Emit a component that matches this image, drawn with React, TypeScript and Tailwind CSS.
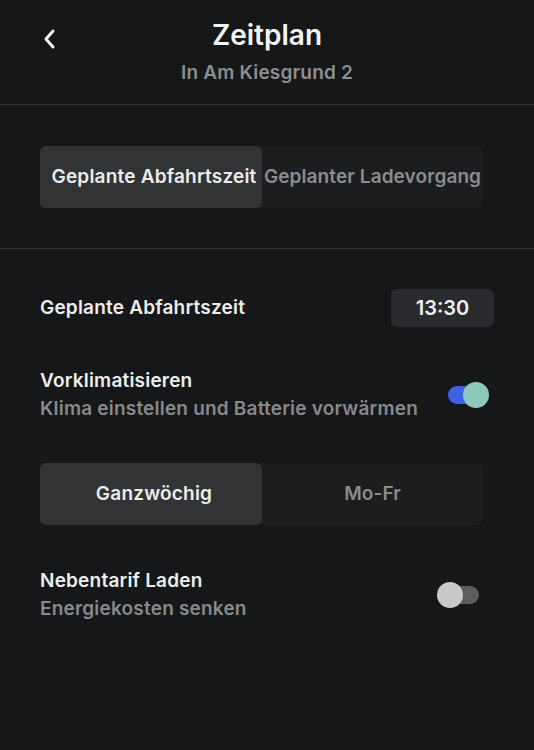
import React from "react";

function Toggle({ on }: { on: boolean }) {
  return on ? (
    <div className="relative h-[26px] w-[42px]">
      <div className="absolute left-[1px] top-[4px] h-[18px] w-[34px] rounded-full bg-[#4061e6]" />
      <div className="absolute right-0 top-0 h-[26px] w-[26px] rounded-full bg-[#8fc9bd]" />
    </div>
  ) : (
    <div className="relative h-[26px] w-[42px]">
      <div className="absolute right-0 top-[4px] h-[18px] w-[34px] rounded-full bg-[#5c5d5f]" />
      <div className="absolute left-0 top-0 h-[26px] w-[26px] rounded-full bg-[#c9c9c9]" />
    </div>
  );
}

function Segmented({ items }: { items: [string, string] }) {
  return (
    <div className="flex h-[62px] w-[443px] rounded-[6px] bg-[#1c1d1f]">
      <div className="flex w-[222px] shrink-0 items-center justify-center whitespace-nowrap rounded-[6px] bg-[#323335] pl-[6px] text-[19px] font-semibold tracking-[0.2px] text-[#ececec]">
        {items[0]}
      </div>
      <div className="flex flex-1 items-center justify-center whitespace-nowrap text-[19px] font-semibold tracking-[0.1px] text-[#8b8c8e]">
        {items[1]}
      </div>
    </div>
  );
}

export default function App() {
  return (
    <div
      className="min-h-[750px] w-[534px] bg-[#161719] text-white"
      style={{ fontFamily: "Inter, 'Noto Sans', sans-serif" }}
    >
      <div className="relative flex h-[105px] flex-col items-center border-b border-[#323335] pt-[16px]">
        <svg
          className="absolute left-[41px] top-[28px]"
          width="16"
          height="22"
          viewBox="0 0 16 22"
          fill="none"
        >
          <path d="M12 3 L5 11 L12 19" stroke="#f2f2f2" strokeWidth="3" strokeLinecap="round" strokeLinejoin="round" />
        </svg>
        <div className="text-[28px] font-semibold leading-[38px] text-[#f4f4f4]">Zeitplan</div>
        <div className="mt-[7px] text-[19px] font-semibold leading-[24px] tracking-[0.2px] text-[#8d8e90]">In Am Kiesgrund 2</div>
      </div>

      <div className="border-b border-[#323335] px-[40px] pb-[40px] pt-[41px]">
        <Segmented items={["Geplante Abfahrtszeit", "Geplanter Ladevorgang"]} />
      </div>

      <div className="px-[40px] pt-[40px]">
        <div className="flex items-center justify-between">
          <div className="text-[19px] font-semibold tracking-[0.2px] text-[#ededed]">Geplante Abfahrtszeit</div>
          <div className="flex h-[38px] w-[103px] items-center justify-center rounded-[6px] bg-[#2a2b2e] text-[20px] font-semibold text-[#f0f0f0]">
            13:30
          </div>
        </div>

        <div className="mt-[40px] flex items-center justify-between">
          <div>
            <div className="text-[19px] font-semibold leading-[28px] tracking-[0.2px] text-[#ededed]">Vorklimatisieren</div>
            <div className="text-[19px] font-semibold leading-[28px] tracking-[0.2px] text-[#88898b]">Klima einstellen und Batterie vorwärmen</div>
          </div>
          <div className="mr-[5px]">
            <Toggle on />
          </div>
        </div>

        <div className="mt-[40px]">
          <Segmented items={["Ganzwöchig", "Mo-Fr"]} />
        </div>

        <div className="mt-[42px] flex items-center justify-between">
          <div>
            <div className="text-[19px] font-semibold leading-[28px] tracking-[0.2px] text-[#ededed]">Nebentarif Laden</div>
            <div className="text-[19px] font-semibold leading-[28px] tracking-[0.2px] text-[#88898b]">Energiekosten senken</div>
          </div>
          <div className="mr-[15px]">
            <Toggle on={false} />
          </div>
        </div>
      </div>
    </div>
  );
}
